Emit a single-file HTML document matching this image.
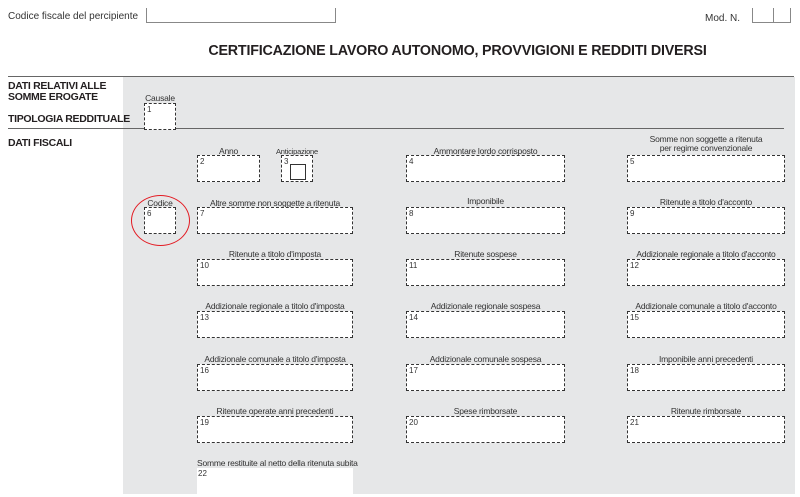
<!DOCTYPE html>
<html><head><meta charset="utf-8"><style>
body{margin:0;width:800px;height:497px;background:#fff;position:relative;overflow:hidden;font-family:"Liberation Sans",sans-serif;color:#231f20}
.a{position:absolute}
.g{background:#e6e7e8}
.b{position:absolute;background:#fff;border:1px dashed #333;box-sizing:border-box;height:27px}
.n{position:absolute;left:2px;top:1px;font-size:8px;color:#333}
.l{position:absolute;font-size:8.5px;text-align:center;white-space:nowrap;color:#333;letter-spacing:-0.2px}
.h{position:absolute;font-size:10.5px;font-weight:bold;left:8px;letter-spacing:-0.3px;line-height:11px}
</style></head><body>
<div class="a" style="left:8px;top:11px;font-size:10px;color:#333">Codice fiscale del percipiente</div>
<div class="a" style="left:146px;top:8px;width:188px;height:14px;border:1px solid #888;border-top:none"></div>
<div class="a" style="left:705px;top:13px;font-size:10px;color:#333">Mod. N.</div>
<div class="a" style="left:752px;top:8px;width:20px;height:14px;border-left:1px solid #888;border-bottom:1px solid #888;border-right:1px solid #888"></div>
<div class="a" style="left:772px;top:8px;width:18px;height:14px;border-bottom:1px solid #888;border-right:1px solid #888"></div>
<div class="a" style="left:0;width:800px;top:43px;text-align:center;font-size:14.3px;font-weight:bold;letter-spacing:-0.2px;padding-left:115px;box-sizing:border-box">CERTIFICAZIONE LAVORO AUTONOMO, PROVVIGIONI E REDDITI DIVERSI</div>
<div class="a g" style="left:123px;top:77px;width:672px;height:417px"></div>
<div class="a" style="left:8px;top:76px;width:786px;height:1px;background:#666"></div>
<div class="a" style="left:8px;top:128px;width:776px;height:1px;background:#666"></div>
<div class="h" style="top:81px">DATI RELATIVI ALLE<br>SOMME EROGATE</div>
<div class="h" style="top:114px">TIPOLOGIA REDDITUALE</div>
<div class="h" style="top:138px">DATI FISCALI</div>

<div class="l" style="left:144px;width:32px;top:93px">Causale</div>
<div class="b" style="left:144px;top:103px;width:32px"><span class="n">1</span></div>

<div class="l" style="left:197px;width:63px;top:146px">Anno</div>
<div class="b" style="left:197px;top:155px;width:63px"><span class="n">2</span></div>
<div class="l" style="left:272px;width:50px;top:147px;font-size:7.5px">Anticipazione</div>
<div class="b" style="left:281px;top:155px;width:32px;height:27px"><span class="n">3</span><div class="a" style="left:8px;top:8px;width:14px;height:14px;border:1px solid #333;background:#fff"></div></div>

<div class="l" style="left:406px;width:159px;top:146px">Ammontare lordo corrisposto</div>
<div class="b" style="left:406px;top:155px;width:159px"><span class="n">4</span></div>
<div class="l" style="left:627px;width:158px;top:135px;line-height:9px">Somme non soggette a ritenuta<br>per regime convenzionale</div>
<div class="b" style="left:627px;top:155px;width:158px"><span class="n">5</span></div>

<div class="l" style="left:144px;width:32px;top:198px">Codice</div>
<div class="b" style="left:144px;top:207px;width:32px"><span class="n">6</span></div>
<div class="a" style="left:131px;top:195px;width:57px;height:49px;border:1.5px solid #e31b23;border-radius:50%"></div>
<div class="l" style="left:197px;width:156px;top:198px">Altre somme non soggette a ritenuta</div>
<div class="b" style="left:197px;top:207px;width:156px"><span class="n">7</span></div>
<div class="l" style="left:406px;width:159px;top:196px">Imponibile</div>
<div class="b" style="left:406px;top:207px;width:159px"><span class="n">8</span></div>
<div class="l" style="left:627px;width:158px;top:197px">Ritenute a titolo d'acconto</div>
<div class="b" style="left:627px;top:207px;width:158px"><span class="n">9</span></div>

<div class="l" style="left:197px;width:156px;top:249px">Ritenute a titolo d'imposta</div>
<div class="b" style="left:197px;top:259px;width:156px"><span class="n">10</span></div>
<div class="l" style="left:406px;width:159px;top:249px">Ritenute sospese</div>
<div class="b" style="left:406px;top:259px;width:159px"><span class="n">11</span></div>
<div class="l" style="left:627px;width:158px;top:249px">Addizionale regionale a titolo d'acconto</div>
<div class="b" style="left:627px;top:259px;width:158px"><span class="n">12</span></div>

<div class="l" style="left:197px;width:156px;top:301px">Addizionale regionale a titolo d'imposta</div>
<div class="b" style="left:197px;top:311px;width:156px"><span class="n">13</span></div>
<div class="l" style="left:406px;width:159px;top:301px">Addizionale regionale sospesa</div>
<div class="b" style="left:406px;top:311px;width:159px"><span class="n">14</span></div>
<div class="l" style="left:627px;width:158px;top:301px">Addizionale comunale a titolo d'acconto</div>
<div class="b" style="left:627px;top:311px;width:158px"><span class="n">15</span></div>

<div class="l" style="left:197px;width:156px;top:354px">Addizionale comunale a titolo d'imposta</div>
<div class="b" style="left:197px;top:364px;width:156px"><span class="n">16</span></div>
<div class="l" style="left:406px;width:159px;top:354px">Addizionale comunale sospesa</div>
<div class="b" style="left:406px;top:364px;width:159px"><span class="n">17</span></div>
<div class="l" style="left:627px;width:158px;top:354px">Imponibile anni precedenti</div>
<div class="b" style="left:627px;top:364px;width:158px"><span class="n">18</span></div>

<div class="l" style="left:197px;width:156px;top:406px">Ritenute operate anni precedenti</div>
<div class="b" style="left:197px;top:416px;width:156px"><span class="n">19</span></div>
<div class="l" style="left:406px;width:159px;top:406px">Spese rimborsate</div>
<div class="b" style="left:406px;top:416px;width:159px"><span class="n">20</span></div>
<div class="l" style="left:627px;width:158px;top:406px">Ritenute rimborsate</div>
<div class="b" style="left:627px;top:416px;width:158px"><span class="n">21</span></div>

<div class="l" style="left:197px;top:458px;text-align:left">Somme restituite al netto della ritenuta subita</div>
<div class="a" style="left:197px;top:468px;width:156px;height:26px;background:#fff"><span class="n" style="left:1px">22</span></div>
</body></html>
